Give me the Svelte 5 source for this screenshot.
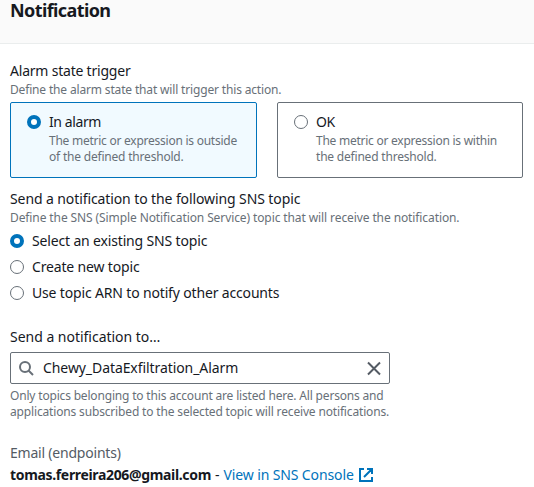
<script>
  const states = [
    { title: 'In alarm', lines: ['The metric or expression is outside', 'of the defined threshold.'] },
    { title: 'OK', lines: ['The metric or expression is within', 'the defined threshold.'] }
  ];
  const topics = ['Select an existing SNS topic', 'Create new topic', 'Use topic ARN to notify other accounts'];
  let state = $state(0);
  let topic = $state(0);
</script>

<main>
  <header><h1>Notification</h1></header>
  <section class="trigger">
    <div class="label snug">Alarm state trigger</div>
    <div class="hint">Define the alarm state that will trigger this action.</div>
    <div class="tiles">
      {#each states as item, i}
        <button class="tile" class:selected={state === i} onclick={() => (state = i)}>
          <span class="radio" class:on={state === i}></span>
          <span class="tile-text">
            <span class="label">{item.title}</span>
            {#each item.lines as line}<span class="hint">{line}</span>{/each}
          </span>
        </button>
      {/each}
    </div>
  </section>
  <section class="topics">
    <div class="label">Send a notification to the following SNS topic</div>
    <div class="hint wide">Define the SNS (Simple Notification Service) topic that will receive the notification.</div>
    <div class="options">
      {#each topics as item, i}
        <button class="option" onclick={() => (topic = i)}>
          <span class="radio" class:on={topic === i}></span>
          <span class="label">{item}</span>
        </button>
      {/each}
    </div>
  </section>
  <section class="send">
    <div class="label loose">Send a notification to…</div>
    <div class="field">
      <svg class="search" viewBox="0 0 16 16"><circle cx="7" cy="7" r="5" /><path d="M10.5 10.5 15 15" /></svg>
      <span class="label value">Chewy_DataExfiltration_Alarm</span>
      <svg class="close" viewBox="0 0 16 16"><path d="M2 2.5 14 14.5M14 2.5 2 14.5" /></svg>
    </div>
    <div class="hint tight">Only topics belonging to this account are listed here. All persons and</div>
    <div class="hint">applications subscribed to the selected topic will receive notifications.</div>
  </section>
  <section class="email">
    <div class="label muted snug">Email (endpoints)</div>
    <div class="endpoint">
      <strong>tomas.ferreira206@gmail.com</strong><span class="dash">-</span><span class="link">View in SNS Console</span>
      <svg class="external" viewBox="0 0 16 16"><path d="M6 2H2v12h12v-4M9 2h5v5M14 2 6 10" /></svg>
    </div>
  </section>
</main>

<style>
  :global(body) { background: #fff; }
  main {
    width: 534px; height: 487px;
    font-family: 'Noto Sans', 'Open Sans', sans-serif;
    font-size: 14px; line-height: 22px; color: #16191f; white-space: nowrap;
  }
  header { height: 43px; background: #fafafa; border-bottom: 1px solid #eaeded; padding-left: 10px; }
  h1 { margin: 0; font-size: 18px; line-height: 20px; font-weight: 700; letter-spacing: -0.6px; }
  section { padding-left: 10px; }
  button { font: inherit; color: inherit; background: none; border: 0; padding: 0; margin: 0; text-align: left; display: flex; }
  .label { display: block; font-size: 14px; line-height: 22px; letter-spacing: -0.1px; }
  .snug { letter-spacing: -0.21px; }
  .loose { letter-spacing: -0.02px; }
  .hint { display: block; font-size: 12px; line-height: 16px; color: #687078; letter-spacing: -0.16px; }
  .hint.wide { letter-spacing: -0.1px; }
  .hint.tight { letter-spacing: -0.18px; }
  .trigger { padding-top: 16px; }
  .tiles { display: flex; gap: 20px; margin-top: 4px; }
  .tile { box-sizing: border-box; width: 247px; height: 76px; border: 1px solid #687078; border-radius: 2px; padding: 8px 0 0 16px; }
  .tile + .tile { width: 246px; }
  .tile.selected { border-color: #0073bb; background: #f1faff; }
  .tile-text { margin-left: 8px; }
  .tile .label { letter-spacing: -0.4px; }
  .tile .hint { letter-spacing: -0.25px; }
  .tile .hint:last-child { letter-spacing: -0.2px; }
  .radio { box-sizing: border-box; flex: none; width: 14px; height: 14px; margin-top: 4px; border: 1px solid #687078; border-radius: 50%; background: #fff; }
  .radio.on { border: 4px solid #0073bb; }
  .topics { padding-top: 10px; }
  .options { display: flex; flex-direction: column; gap: 4px; margin-top: 4px; }
  .option .label { margin-left: 8px; letter-spacing: -0.16px; }
  .send { padding-top: 22px; }
  .field { box-sizing: border-box; display: flex; align-items: center; width: 380px; height: 32px; border: 1px solid #687078; border-radius: 2px; margin: 4px 0; padding: 0 7px; }
  svg { flex: none; width: 16px; height: 16px; fill: none; stroke: #545b64; stroke-width: 2; }
  .search { stroke: #687078; }
  .value { flex: 1; margin-left: 9px; letter-spacing: -0.08px; }
  .email { padding-top: 22px; }
  .muted { color: #545b64; }
  .endpoint { display: flex; align-items: center; }
  strong { letter-spacing: -0.34px; }
  .dash { margin: 0 4px; }
  .link { color: #0073bb; letter-spacing: -0.12px; }
  .external { stroke: #0073bb; margin-left: 4px; }
</style>
